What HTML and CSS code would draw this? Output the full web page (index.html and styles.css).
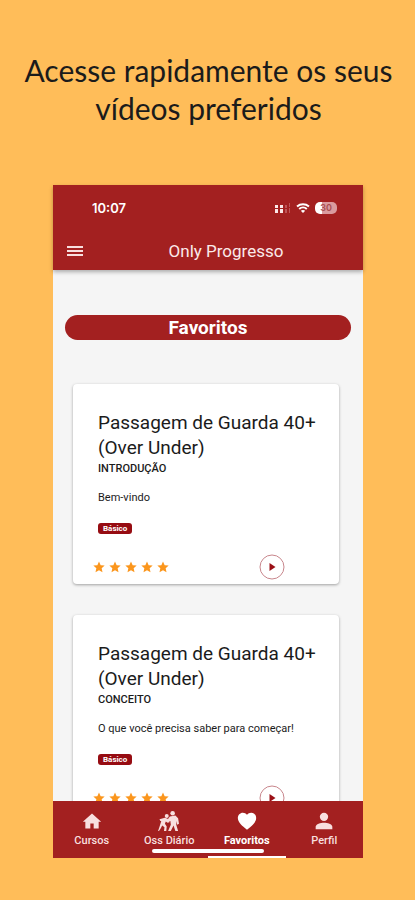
FILE: index.html
```html
<!DOCTYPE html>
<html lang="pt-BR">
<head>
<meta charset="utf-8">
<meta name="viewport" content="width=device-width, initial-scale=1">
<title>Only Progresso</title>
<link rel="stylesheet" href="styles.css">
</head>
<body>
<svg class="defs" aria-hidden="true">
  <symbol id="star" viewBox="0 0 24 24"><path d="M12 1l3.300 7.300 8 .9-6 5.400 1.700 7.900L12 18.500 5 22.500l1.700-7.900-6-5.400 8-.9z"/></symbol>
  <symbol id="play" viewBox="0 0 26 26"><circle cx="13" cy="13" r="12" fill="none" stroke="#c8868c"/><path d="M10.500 9v8l6-4z" fill="#9b1016"/></symbol>
</svg>
<h1 class="headline">Acesse rapidamente os seus vídeos preferidos</h1>
<div class="phone">
  <header class="top">
    <div class="status">
      <span class="clock">10:07</span>
      <span class="signals">
        <svg class="cell" viewBox="0 0 16 10" aria-hidden="true"><g fill="#fbe9e9"><path d="M0 2h3v3H0zM0 6h3v4H0zM5 2h3v3H5zM5 6h3v4H5z"/></g><g fill="#bd5659"><path d="M10 2h2v3h-2zM10 6h2v4h-2zM14 0h1v4h-1zM14 5h1v5h-1z"/></g></svg>
        <svg class="wifi" viewBox="0 0 14 10" aria-hidden="true"><g fill="none" stroke="#fff" stroke-width="2"><path d="M1 3.500c3.500-3 8.500-3 12 0"/><path d="M3.200 6c2.200-2 5.400-2 7.600 0"/></g><path d="M4.800 7.800c1.300-1.100 3.100-1.100 4.400 0L7 10z" fill="#fff"/></svg>
        <span class="battery">30</span>
      </span>
    </div>
    <div class="bar">
      <button class="menu" aria-label="Menu"><svg viewBox="0 0 16 12"><path d="M0 2h16M0 6h16M0 10h16" stroke="#f8dfdf" stroke-width="2"/></svg></button>
      <span class="app">Only Progresso</span>
    </div>
  </header>
  <main class="feed">
    <h2 class="section">Favoritos</h2>
    <article class="card">
      <h3>Passagem de Guarda 40+ (Over Under)</h3>
      <p class="kind">INTRODUÇÃO</p>
      <p class="desc">Bem-vindo</p>
      <span class="badge">Básico</span>
      <div class="actions">
        <span class="stars" role="img" aria-label="5 estrelas"><svg><use href="#star"/></svg><svg><use href="#star"/></svg><svg><use href="#star"/></svg><svg><use href="#star"/></svg><svg><use href="#star"/></svg></span>
        <button class="play" aria-label="Reproduzir"><svg><use href="#play"/></svg></button>
      </div>
    </article>
    <article class="card">
      <h3>Passagem de Guarda 40+ (Over Under)</h3>
      <p class="kind">CONCEITO</p>
      <p class="desc">O que você precisa saber para começar!</p>
      <span class="badge">Básico</span>
      <div class="actions">
        <span class="stars" role="img" aria-label="5 estrelas"><svg><use href="#star"/></svg><svg><use href="#star"/></svg><svg><use href="#star"/></svg><svg><use href="#star"/></svg><svg><use href="#star"/></svg></span>
        <button class="play" aria-label="Reproduzir"><svg><use href="#play"/></svg></button>
      </div>
    </article>
  </main>
  <nav class="tabs">
    <a href="#cursos"><svg viewBox="0 0 24 24"><path d="M10 21v-6h4v6h6v-8h3L12 3 1 13h3v8z"/></svg>Cursos</a>
    <a href="#oss"><svg class="wide" viewBox="0 0 24 22"><circle cx="9.500" cy="5.500" r="2.200"/><circle cx="16" cy="2.500" r="2.500"/><path d="M13 6l6-1 3 3 1 6-2 1-1-4v4l2 7h-3l-2-6-3 6h-3l3-7-.5-4-2 1-1.500-2z"/><path d="M7.500 7.500l3 1 2 4-2 .5-2-1.500-1 2.500 2 3-.5 5H6.500l.5-4-2.500-2-1.500 3-2 3H0l2-6 1.500-5-1 0-1-2z"/></svg>Oss Diário</a>
    <a href="#favoritos" class="active" aria-current="page"><svg viewBox="0 0 24 24"><path d="M12 22.500C6 17.500 1 13.500 1 8.300 1 4.800 3.700 2 7 2c2 0 3.900 1 5 2.600C13.100 3 15 2 17 2c3.300 0 6 2.800 6 6.300 0 5.200-5 9.200-11 14.200z"/></svg>Favoritos</a>
    <a href="#perfil"><svg viewBox="0 0 24 24"><circle cx="12" cy="7" r="5"/><path d="M2 22v-3c0-3.500 6-5 10-5s10 1.500 10 5v3z"/></svg>Perfil</a>
    <span class="home-indicator"></span>
  </nav>
</div>
</body>
</html>
```
FILE: styles.css
```css
* { box-sizing: border-box; }
body {
  margin: 0;
  height: 100vh;
  padding: 51px 52px 42px 53px;
  display: flex;
  flex-direction: column;
  background: #ffbd59;
  font-family: Roboto, "Liberation Sans", sans-serif;
  color: #1b1b1b;
}
h1, h2, h3, p { margin: 0; font-weight: 400; }
button { padding: 0; border: 0; background: none; }
svg { display: block; }
.defs { position: absolute; width: 0; height: 0; }
.headline {
  margin: 0 -40px 58px -39px;
  font: 400 30px/38px Lato, sans-serif;
  text-align: center;
}
.phone {
  flex: 1;
  min-height: 0;
  display: flex;
  flex-direction: column;
  background: #f5f5f5;
}
.top {
  z-index: 1;
  background: #a32020;
  color: #fff;
  box-shadow: 0 2px 4px rgba(0, 0, 0, .3);
}
.status {
  height: 46px;
  padding: 0 26px 0 39px;
  display: flex;
  align-items: center;
  justify-content: space-between;
}
.clock { font: 600 13px/16px Inter, sans-serif; }
.signals { display: flex; align-items: center; gap: 5px; }
.cell { width: 16px; height: 10px; }
.wifi { width: 14px; height: 10px; }
.battery {
  width: 22px;
  height: 12px;
  border-radius: 5px;
  background: linear-gradient(to right, #fff 30%, #da9b9e 30%);
  color: #a94d51;
  font: 600 9px/12px Inter, sans-serif;
  text-align: center;
}
.bar {
  height: 39px;
  padding: 0 14px;
  display: flex;
  align-items: center;
}
.menu svg { width: 16px; height: 12px; }
.app {
  flex: 1;
  padding-left: 20px;
  color: #fbe9e9;
  font-size: 17px;
  font-weight: 400;
  line-height: 20px;
  text-align: center;
}
.feed {
  flex: 1;
  min-height: 0;
  overflow: hidden;
  padding: 45px 12px 0;
}
.section {
  margin-bottom: 44px;
  border-radius: 13px;
  background: #a32020;
  color: #fff;
  font-size: 19px;
  font-weight: 700;
  line-height: 25px;
  text-align: center;
}
.card {
  margin: 0 12px 31px 8px;
  padding: 26px 20px 4px 25px;
  border-radius: 4px;
  background: #fff;
  box-shadow: 0 1px 3px rgba(0, 0, 0, .35);
}
.card h3 { font-size: 19px; line-height: 25px; }
.kind { font-size: 11px; font-weight: 500; line-height: 18px; }
.desc { margin-top: 11px; font-size: 11px; line-height: 18px; }
.badge {
  display: block;
  width: fit-content;
  margin-top: 16px;
  padding: 0 5px;
  border-radius: 3px;
  background: #960c12;
  color: #fff;
  font-size: 8px;
  font-weight: 700;
  line-height: 11px;
}
.actions {
  display: flex;
  align-items: center;
  justify-content: space-between;
  margin-top: 20px;
  padding-right: 34px;
}
.stars { display: flex; gap: 4px; margin-left: -5px; fill: #fb961d; }
.stars svg { width: 12px; height: 12px; }
.play svg { width: 26px; height: 26px; }
.tabs {
  position: relative;
  height: 57px;
  display: flex;
  background: #a32020;
}
.tabs a {
  flex: 1;
  display: flex;
  flex-direction: column;
  align-items: center;
  gap: 3px;
  padding-top: 10px;
  color: #f8dfdf;
  fill: #f8dfdf;
  font-size: 11px;
  font-weight: 500;
  line-height: 14px;
  text-decoration: none;
}
.tabs svg { width: 20px; height: 20px; }
.tabs .wide { width: 22px; }
.tabs .active {
  color: #fff;
  fill: #fff;
  font-weight: 700;
  border-bottom: 2px solid #fff;
}
.home-indicator {
  position: absolute;
  left: 50%;
  bottom: 5px;
  width: 112px;
  height: 4px;
  border-radius: 2px;
  background: #fff;
  transform: translateX(-50%);
}
```
